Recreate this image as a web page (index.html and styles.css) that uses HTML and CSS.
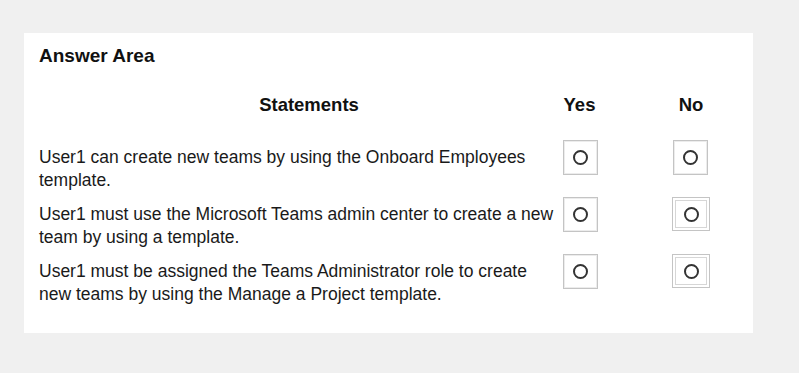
FILE: index.html
```html
<!DOCTYPE html>
<html lang="en">
<head>
    <meta charset="UTF-8">
    <meta name="viewport" content="width=device-width, initial-scale=1.0">
    <title>Answer Area</title>
    <link rel="stylesheet" href="styles.css">
</head>
<body>
    <div class="answer-area">
        <h1>Answer Area</h1>

        <div class="table">
            <div class="row header">
                <div class="head statements">Statements</div>
                <div class="head yes">Yes</div>
                <div class="head no">No</div>
            </div>

            <div class="row">
                <p class="statement">User1 can create new teams by using the Onboard Employees template.</p>
                <label class="box yes"><input type="radio" name="q1" value="yes"></label>
                <label class="box no"><input type="radio" name="q1" value="no"></label>
            </div>

            <div class="row">
                <p class="statement">User1 must use the Microsoft Teams admin center to create a new team by using a template.</p>
                <label class="box yes"><input type="radio" name="q2" value="yes"></label>
                <label class="box no double"><input type="radio" name="q2" value="no"></label>
            </div>

            <div class="row">
                <p class="statement">User1 must be assigned the Teams Administrator role to create new teams by using the Manage a Project template.</p>
                <label class="box yes"><input type="radio" name="q3" value="yes"></label>
                <label class="box no double"><input type="radio" name="q3" value="no"></label>
            </div>
        </div>
    </div>
</body>
</html>
```

FILE: styles.css
```css
body {
    font-family: "Liberation Sans", Arial, sans-serif;
    color: #1a1a1a;
    margin: 0;
    padding: 33px 0 0 24px;
    background-color: #f0f0f0;
}

.answer-area {
    width: 729px;
    box-sizing: border-box;
    background-color: white;
    padding: 12px 15px 27px 15px;
}

h1 {
    font-size: 19px;
    font-weight: bold;
    color: #111;
    margin: 0 0 27px 0;
}

.table {
    display: flex;
    flex-direction: column;
    gap: 5px;
}

.row {
    display: grid;
    grid-template-columns: 524px 35px 75px 36px;
    align-items: start;
}

.row .yes {
    grid-column: 2;
}

.row .no {
    grid-column: 4;
}

.header {
    margin-bottom: 19px;
}

.head {
    font-size: 18.5px;
    font-weight: bold;
    color: #111;
    text-align: center;
    white-space: nowrap;
}

.head.yes {
    margin-left: -2px;
}

.statements {
    padding-left: 16px;
}

.statement {
    margin: 0;
    padding-top: 6px;
    font-size: 17.5px;
    line-height: 23px;
}

.box {
    width: 35px;
    height: 35px;
    box-sizing: border-box;
    border: 1px solid #c4c4c4;
    box-shadow: inset 0 0 0 1px #ececec;
    display: flex;
    justify-content: center;
    align-items: center;
    cursor: pointer;
}

.box.double {
    width: 38px;
    height: 34px;
    margin-left: -1px;
    box-shadow: inset 0 0 0 2px white, inset 0 0 0 3px #d6d6d6;
}

.box input {
    appearance: none;
    -webkit-appearance: none;
    margin: 0;
    width: 15px;
    height: 15px;
    border: 2px solid #333;
    border-radius: 50%;
    background-color: white;
    cursor: pointer;
}

.box input:checked {
    background: radial-gradient(#333 35%, white 40%);
}
```
